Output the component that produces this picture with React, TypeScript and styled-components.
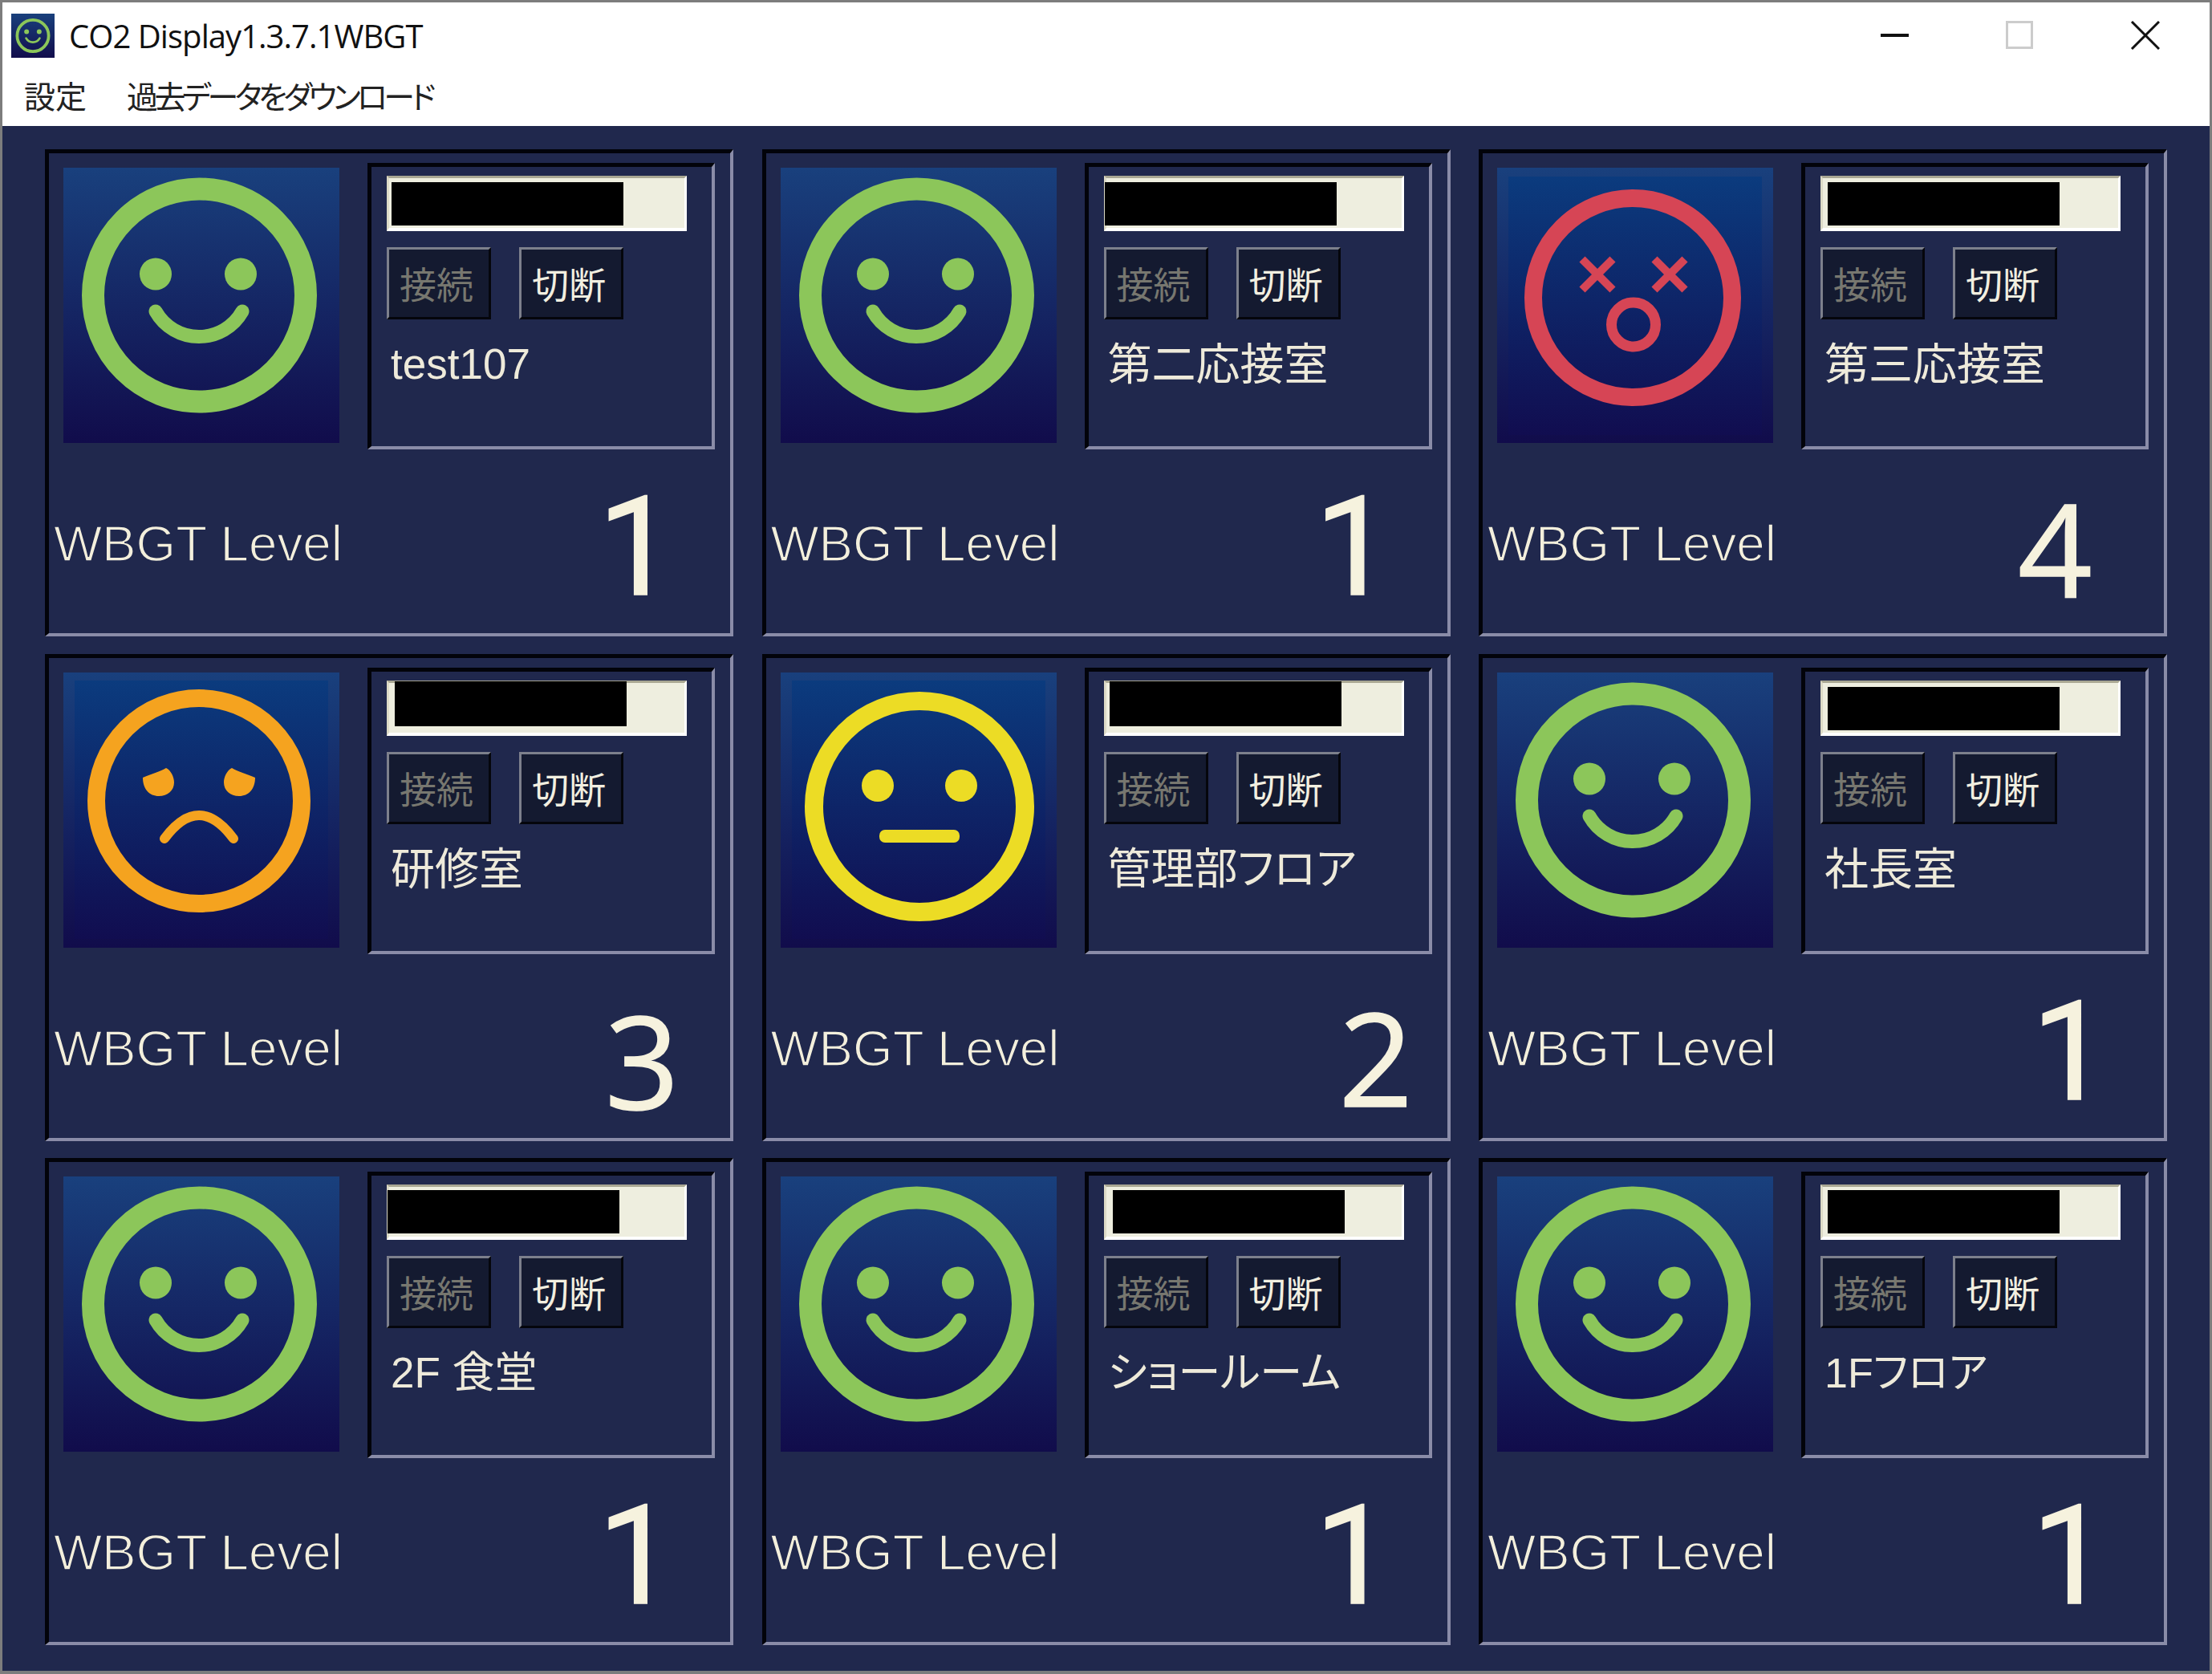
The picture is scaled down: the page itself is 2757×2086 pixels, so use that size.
import React from 'react'
import styled, { createGlobalStyle } from 'styled-components'

const GlobalStyle = createGlobalStyle`
  html, body {
    margin: 0;
    padding: 0;
    background: #fff;
  }
`

const Window = styled.div`
  box-sizing: border-box;
  width: 2757px;
  height: 2086px;
  border: 3px solid #7d7d7d;
  border-bottom-width: 4px;
  display: flex;
  flex-direction: column;
  overflow: hidden;
`

const Header = styled.header`
  height: 154px;
  background: #fff;
  flex: none;
`

const TitleBar = styled.div`
  height: 82px;
  display: flex;
  align-items: center;
  padding: 0 62px 0 11px;
`

const AppIcon = styled.div`
  width: 54px;
  height: 55px;
  background: linear-gradient(#19407c, #120d4c);
  svg {
    display: block;
    width: 100%;
    height: 100%;
  }
`

const Title = styled.div`
  font-family: 'Open Sans', sans-serif;
  font-size: 40px;
  letter-spacing: -0.95px;
  color: #111;
  margin-left: 18px;
  flex: 1;
`

const WindowButtons = styled.div`
  display: flex;
  align-items: center;
  svg {
    display: block;
  }
`

const MenuBar = styled.nav`
  display: flex;
  gap: 50px;
  padding: 8px 0 0 27px;
  font-family: 'Noto Sans CJK JP', sans-serif;
  font-feature-settings: 'palt';
  font-size: 39px;
  line-height: 50px;
  color: #222;
`

const MenuItem = styled.span<{ $tight?: boolean }>`
  letter-spacing: ${({ $tight }) => ($tight ? '-4.6px' : '0')};
`

const Main = styled.main`
  flex: 1;
  background: #20284d;
  padding: 29px 54px 0 53px;
  display: grid;
  grid-template-columns: repeat(3, 858px);
  grid-auto-rows: 607px;
  column-gap: 35.5px;
  row-gap: 21.5px;
`

const Card = styled.section`
  box-sizing: border-box;
  border: solid;
  border-width: 5px 4px 4px 5px;
  border-color: #02030a #8a8ca8 #8a8ca8 #02030a;
  padding: 12px 18px 0 6px;
  display: flex;
  flex-direction: column;
`

const Top = styled.div`
  display: flex;
  align-items: flex-start;
  gap: 35px;
  margin-left: 12px;
`

const FaceTile = styled.div<{ $inset: boolean }>`
  width: 344px;
  height: 343px;
  margin-top: 6px;
  flex: none;
  background: ${({ $inset }) =>
      $inset ? 'linear-gradient(#0b3b7e, #110d50) center / 316px 322px no-repeat,' : ''}
    linear-gradient(#19407d, #110c4b);
  svg {
    display: block;
  }
`

const Panel = styled.div`
  box-sizing: border-box;
  width: 433px;
  height: 357px;
  border: solid;
  border-width: 5px 4px 4px 5px;
  border-color: #02030a #8a8ca8 #8a8ca8 #02030a;
  padding: 11px 0 0 19px;
`

const Gauge = styled.div`
  box-sizing: border-box;
  width: 374px;
  height: 69px;
  background: #eeeedf;
  border: solid;
  border-width: 3px 3px 4px 3px;
  border-color: #a9a793 #fff #fff #dcdac6;
  display: flow-root;
`

const GaugeFill = styled.div<{ $left: number; $top: number; $high: number }>`
  width: 289px;
  height: ${({ $high }) => $high}px;
  margin-left: ${({ $left }) => $left}px;
  margin-top: ${({ $top }) => $top}px;
  background: #000;
`

const Buttons = styled.div`
  display: flex;
  gap: 35px;
  margin-top: 20px;
`

const ActionButton = styled.div<{ $disabled?: boolean }>`
  box-sizing: border-box;
  width: 130px;
  height: 90px;
  padding: 0 6px 2px 0;
  display: flex;
  align-items: center;
  justify-content: center;
  background: #141a30;
  border: solid;
  border-width: 3px;
  border-color: #7d808c #05060c #05060c #7d808c;
  font-family: 'Noto Sans CJK JP', sans-serif;
  font-size: 46px;
  color: ${({ $disabled }) => ($disabled ? '#77776f' : '#f2efe0')};
`

const RoomName = styled.div<{ $size: number }>`
  margin: 21px 0 0 5px;
  font-family: 'Liberation Sans', 'Noto Sans CJK JP', sans-serif;
  font-feature-settings: 'palt';
  font-size: ${({ $size }) => $size}px;
  line-height: 70px;
  color: #eeeada;
  white-space: nowrap;
`

const LevelRow = styled.div`
  display: flex;
  align-items: flex-start;
`

const LevelLabel = styled.div`
  margin-top: 81px;
  width: 364px;
  font-family: 'Liberation Sans', sans-serif;
  font-size: 63.7px;
  line-height: 72px;
  color: #f3efdc;
  -webkit-text-stroke: 1.5px #20284d;
  white-space: nowrap;
`

const LevelValue = styled.div<{ $left: number; $top: number; $one: boolean }>`
  margin-left: ${({ $left }) => $left}px;
  margin-top: ${({ $top }) => $top}px;
  font-family: ${({ $one }) => ($one ? 'Roboto' : "'Open Sans'")}, sans-serif;
  font-size: ${({ $one }) => ($one ? 172 : 162)}px;
  line-height: 168px;
  color: #f6f2de;
  -webkit-text-stroke: 1.5px #f6f2de;
`

const GREEN = '#8cc65a'
const RED = '#d64555'
const ORANGE = '#f5a31f'
const YELLOW = '#ecdc25'

const Smile = () => (
  <svg width="344" height="343" viewBox="0 0 344 343">
    <circle cx="169.5" cy="159" r="132.5" fill="none" stroke={GREEN} strokeWidth="28" />
    <circle cx="115" cy="132.5" r="20" fill={GREEN} />
    <circle cx="221" cy="132.5" r="20" fill={GREEN} />
    <path d="M115 179A62 62 0 0 0 223 179" fill="none" stroke={GREEN} strokeWidth="17" strokeLinecap="round" />
  </svg>
)

const Shock = () => (
  <svg width="344" height="343" viewBox="0 0 344 343">
    <circle cx="169" cy="162" r="124" fill="none" stroke={RED} strokeWidth="22" />
    <path d="M106 114L144 152M144 114L106 152M196 114L234 152M234 114L196 152" stroke={RED} strokeWidth="10" />
    <circle cx="170" cy="195.5" r="27.5" fill="none" stroke={RED} strokeWidth="13" />
  </svg>
)

const Sad = () => (
  <svg width="344" height="343" viewBox="0 0 344 343">
    <circle cx="169" cy="160" r="128" fill="none" stroke={ORANGE} strokeWidth="22" />
    <path d="M99 131C108 127 122 123 128 119C134 122 138 130 138 137C138 147 130 154 119 154C107 154 99 145 99 131Z" fill={ORANGE} />
    <path d="M239 131C230 127 216 123 210 119C204 122 200 130 200 137C200 147 208 154 219 154C231 154 239 145 239 131Z" fill={ORANGE} />
    <path d="M126 207Q169 149 212 207" fill="none" stroke={ORANGE} strokeWidth="12" strokeLinecap="round" />
  </svg>
)

const Neutral = () => (
  <svg width="344" height="343" viewBox="0 0 344 343">
    <circle cx="173" cy="167" r="131.5" fill="none" stroke={YELLOW} strokeWidth="23" />
    <circle cx="121" cy="141" r="20" fill={YELLOW} />
    <circle cx="225" cy="141" r="20" fill={YELLOW} />
    <rect x="123" y="196" width="100" height="16" rx="7" fill={YELLOW} />
  </svg>
)

const faces = { 1: Smile, 2: Neutral, 3: Sad, 4: Shock }

const valueSpots: Record<number, { left: number; top: number }> = {
  1: { left: 314, top: 38 },
  2: { left: 344, top: 43 },
  3: { left: 323, top: 46 },
  4: { left: 297, top: 38 },
}

const rooms = [
  { name: 'test107', size: 53, level: 1, fill: 3, fillTop: 5, fillHigh: 54 },
  { name: '第二応接室', size: 55, level: 1, fill: -2, fillTop: 5, fillHigh: 54 },
  { name: '第三応接室', size: 55, level: 4, fill: 6, fillTop: 5, fillHigh: 54 },
  { name: '研修室', size: 55, level: 3, fill: 7, fillTop: -2, fillHigh: 56 },
  { name: '管理部フロア', size: 54, level: 2, fill: 4, fillTop: -2, fillHigh: 56 },
  { name: '社長室', size: 55, level: 1, fill: 6, fillTop: 5, fillHigh: 54 },
  { name: '2F 食堂', size: 53, level: 1, fill: -2, fillTop: 4, fillHigh: 54 },
  { name: 'ショールーム', size: 53, level: 1, fill: 8, fillTop: 4, fillHigh: 54 },
  { name: '1Fフロア', size: 52, level: 1, fill: 6, fillTop: 4, fillHigh: 54 },
]

const App = () => (
  <>
    <GlobalStyle />
    <Window>
      <Header>
        <TitleBar>
          <AppIcon>
            <svg viewBox="0 0 344 343">
              <circle cx="172" cy="171" r="125" fill="none" stroke={GREEN} strokeWidth="24" />
              <circle cx="122" cy="140" r="19" fill={GREEN} />
              <circle cx="222" cy="140" r="19" fill={GREEN} />
              <path d="M118 192A62 62 0 0 0 226 192" fill="none" stroke={GREEN} strokeWidth="17" strokeLinecap="round" />
            </svg>
          </AppIcon>
          <Title>CO2 Display1.3.7.1WBGT</Title>
          <WindowButtons>
            <svg width="348" height="36" viewBox="0 0 348 36">
              <rect x="0" y="16" width="35" height="4" fill="#111" />
              <rect x="157.5" y="1.5" width="31" height="32" fill="none" stroke="#ccc" strokeWidth="3" />
              <path d="M313 1L347 35M347 1L313 35" stroke="#111" strokeWidth="3" />
            </svg>
          </WindowButtons>
        </TitleBar>
        <MenuBar>
          <MenuItem>設定</MenuItem>
          <MenuItem $tight>過去データをダウンロード</MenuItem>
        </MenuBar>
      </Header>
      <Main>
        {rooms.map((room) => {
          const Face = faces[room.level as keyof typeof faces]
          const spot = valueSpots[room.level]
          return (
            <Card key={room.name}>
              <Top>
                <FaceTile $inset={room.level !== 1}>
                  <Face />
                </FaceTile>
                <Panel>
                  <Gauge>
                    <GaugeFill $left={room.fill} $top={room.fillTop} $high={room.fillHigh} />
                  </Gauge>
                  <Buttons>
                    <ActionButton $disabled>接続</ActionButton>
                    <ActionButton>切断</ActionButton>
                  </Buttons>
                  <RoomName $size={room.size}>{room.name}</RoomName>
                </Panel>
              </Top>
              <LevelRow>
                <LevelLabel>WBGT Level</LevelLabel>
                <LevelValue $left={spot.left} $top={spot.top} $one={room.level === 1}>
                  {room.level}
                </LevelValue>
              </LevelRow>
            </Card>
          )
        })}
      </Main>
    </Window>
  </>
)

export default App
